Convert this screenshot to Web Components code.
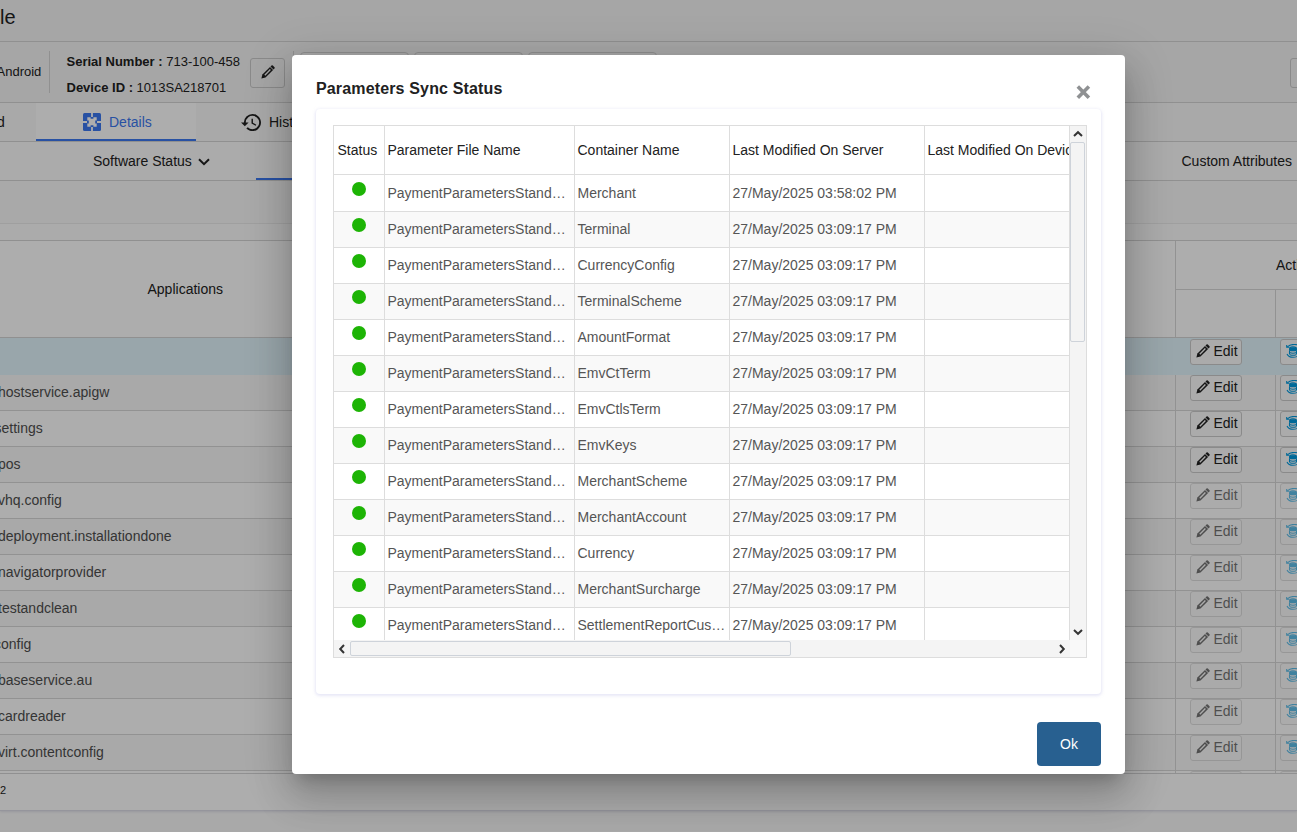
<!DOCTYPE html>
<html lang="en">
<head>
<meta charset="utf-8">
<title>Device Profile</title>
<style>
html,body{margin:0;padding:0;height:100%;overflow:hidden;background:#f9f9f9}
body{font-family:"Liberation Sans",Arial,sans-serif;font-size:14px;color:#212121}
</style>
</head>
<body>
<device-page></device-page>
<sync-dialog heading="Parameters Sync Status">
  <param-table></param-table>
</sync-dialog>
<script>
const icons = {
  blank: '',
  pencil: '<svg viewBox="0 0 14 14" width="14" height="14"><path d="M.4 13.6 1.4 9.500 9 1.900 12.100 5 4.500 12.600Z" fill="currentColor"/><path d="M9.500 1.500 10.500.5Q11.100 0 11.800.5L13.500 2.200Q14 2.800 13.500 3.500L12.500 4.500Z" fill="currentColor"/><path d="M3.300 9.700 8.900 4.100 9.900 5.100 4.300 10.700Z" fill="var(--hole,#fff)"/></svg>',
  terminal: '<svg viewBox="0 0 14 14" width="14" height="14" fill="none" stroke="#009be0" stroke-width="1.1"><path d="M1.200 2.900Q6.500-1 12.500 1.200"/><path d="M.7 1.100v2.200h2.500"/><path d="M1 10Q2.500 13.300 7 13.300 11 13.300 13 11"/><path d="M3 4.200Q7 2.400 11 4.200V6.700Q7 8 3 6.700Z" fill="#009be0" stroke="none"/><path d="M3.300 4Q7 1.800 10.700 4M3.500 8.600Q7 9.800 10.500 8.600M4 10.700Q7 11.800 10 10.700M3.500 7v3.500M10.500 7v3.500"/></svg>',
  details: '<svg viewBox="0 0 18 18" width="18" height="18"><rect width="18" height="18" rx="1.500" fill="#3b78f0"/><path d="M9 0v4M9 14V18M0 9h4M14 9H18" stroke="#fff" stroke-width="1.800"/><path d="M4.300 4.300H7.600V5.800H10.400V4.300H13.700V7.600H12.200V10.400H13.700V13.700H10.400V12.200H7.600V13.700H4.300V10.400H5.800V7.600H4.300Z" fill="#fff"/></svg>',
  history: '<svg viewBox="1 1 22 19" width="21" height="19"><path d="M13 1.500a9 9 0 0 0-9 9H1l4 4 4-4H6a7 7 0 1 1 2.100 4.950L6.600 16.900A9 9 0 1 0 13 1.500Zm-1 5v5l4.300 2.500.7-1.200-3.500-2.100V6.500Z" fill="currentColor"/></svg>'
};
function chevron(deg){
  return `<svg viewBox="0 0 10 10" width="10" height="10" style="transform:rotate(${deg}deg)"><path d="M1 7 5 3.200 9 7" fill="none" stroke="#333" stroke-width="2"/></svg>`;
}
class Base extends HTMLElement {
  render(html){ this.attachShadow({mode:'open'}).innerHTML = '<style>*{box-sizing:border-box}svg{display:block;flex:none}</style>' + html; }
}

customElements.define('icon-button', class extends Base {
  connectedCallback(){
    this.render(`<style>
      :host{display:flex;box-sizing:border-box;height:26px;border:1px solid #ccc;border-radius:3px;align-items:center;overflow:hidden;flex:none;color:#212121;background:var(--fill,transparent)}
      :host([off]){opacity:.62}
      div{margin:-3px 4px 0 4.5px}
      span{margin-top:-2px}
    </style><div>${icons[this.getAttribute('icon')]}</div><span><slot></slot></span>`);
  }
});

customElements.define('app-row', class extends Base {
  connectedCallback(){
    const off = this.hasAttribute('off') ? 'off' : '';
    this.render(`<style>
      :host{display:grid;grid-template-columns:1175px 100px 22px;height:36px;box-sizing:border-box;border-bottom:1px solid #d8d8d8;color:#4e4e4e;flex:none}
      :host([odd]){background:#f9f9f9}
      :host([active]){background:#e2f5fc;height:37px;border-bottom:0;--line:transparent}
      .name{white-space:nowrap;line-height:34px}
      .name span{margin-left:var(--dx,0px)}
      .cell{border-left:1px solid var(--line,#d8d8d8);overflow:hidden;display:flex;align-items:flex-start}
      :host([active]) .cell{padding-top:1px}
      .cell icon-button{width:52px;margin-left:14px;--hole:#fdfdfd;--fill:#fdfdfd}
      .cell icon-button.t{margin-left:4px}
    </style>
    <div class="name"><span><slot></slot></span></div>
    <div class="cell"><icon-button icon="pencil" ${off}>Edit</icon-button></div>
    <div class="cell"><icon-button class="t" icon="terminal" ${off}></icon-button></div>`);
  }
});

customElements.define('device-page', class extends Base {
  connectedCallback(){
    const apps = [['hostservice.apigw',-2],['settings',-5.5],['pos',-2],['vhq.config',-2],['deployment.installationdone',-2],['navigatorprovider',-2],['testandclean',-2],['config',-6],['baseservice.au',-2],['cardreader',-2],['virt.contentconfig',-2]];
    this.render(`<style>
      :host{display:flex;flex-direction:column;width:1297px;height:832px;overflow:hidden}
      header{height:42px;background:#f5f5f5;border-bottom:1px solid #d4d4d4;font-size:20px;line-height:35px;white-space:nowrap}
      .info{height:61px;background:#f5f5f5;border-bottom:1px solid #d4d4d4;display:flex;align-items:flex-start;white-space:nowrap;font-size:13px;overflow:hidden}
      .info>*{flex:none}
      .os{width:50px;height:42px;margin-top:9px;border-right:1px solid #d4d4d4;line-height:42px}
      .os span{margin-left:-3.5px}
      .ids{width:200px;padding:7px 0 0 16.5px;line-height:26px}
      .info icon-button{width:35px;height:30px;margin-top:16px;padding-left:5px;--hole:#f5f5f5}
      .sep{width:7px;height:42px;margin-top:9px;border-left:1px solid #d4d4d4;margin-left:8px}
      .ghost{height:30px;margin:10px 5px 0 0;border:1px solid #d0d0d0;border-radius:4px}
      .tabs{height:39px;display:flex;background:#f9f9f9;border-bottom:1px solid #d4d4d4;line-height:38px}
      .tab{display:flex;align-items:center;white-space:nowrap}
      .tab.on{width:160px;background:#fff;color:#3b78f0;border-bottom:2px solid #3b78f0;height:38px;padding:2px 0 0 47px;gap:8px;line-height:34px}
      .sub{height:39px;display:flex;background:#fcfcfc;border-bottom:1px solid #d4d4d4;line-height:38px;white-space:nowrap}
      .sub .cur{width:160px;border-bottom:2px solid #3b78f0;height:38px}
      .band{height:43px;background:#f9f9f9;border-bottom:1px solid #ebebeb}
      .gap{height:17px;background:#fdfdfd;border-bottom:1px solid #d4d4d4}
      .thead{height:97px;flex:none;display:grid;grid-template-columns:1175px 122px;background:#fff;border-bottom:1px solid #d4d4d4}
      .thead>div:first-child{padding-left:147.5px;line-height:96px}
      .act{border-left:1px solid #d8d8d8;display:grid;grid-template-rows:49px 1fr;grid-template-columns:99px 22px}
      .act b{font-weight:400;grid-column:1/3;border-bottom:1px solid #d8d8d8;line-height:48px;padding-left:100px;overflow:hidden}
      .act i{border-right:1px solid #d8d8d8;width:100px}
      .rows{height:436px;overflow:hidden;flex:none;background:#fff;border-bottom:1px solid #d4d4d4;display:flex;flex-direction:column}
      .foot{height:37px;flex:none;background:#fff;border-bottom:1px solid #dcdce6;box-shadow:0 1px 2px #e0e0e8;font-size:11px;line-height:33px;position:relative}
    </style>
    <header>le</header>
    <div class="info">
      <div class="os"><span>Android</span></div>
      <div class="ids"><div><b>Serial Number :</b> 713-100-458</div><div><b>Device ID :</b> 1013SA218701</div></div>
      <icon-button icon="pencil"></icon-button>
      <div class="sep"></div>
      <div class="ghost" style="width:109px"></div><div class="ghost" style="width:109px"></div><div class="ghost" style="width:129px"></div>
      <icon-button icon="blank" style="margin-left:628px"></icon-button>
    </div>
    <div class="tabs">
      <div class="tab" style="width:36px"><span style="margin-left:-3px">d</span></div>
      <div class="tab on">${icons.details}<span>Details</span></div>
      <div class="tab" style="padding-left:45px;gap:7px">${icons.history}<span>History</span></div>
    </div>
    <div class="sub">
      <div style="width:93px"></div>
      <div style="width:163px;display:flex;gap:6px;align-items:center"><span>Software Status</span><svg width="12" height="8" viewBox="0 0 12 8" style="margin-top:1px"><path d="M1 1.200 6 6.200 11 1.200" fill="none" stroke="#212121" stroke-width="2"/></svg></div>
      <div class="cur"></div>
      <div style="margin-left:765.5px">Custom Attributes</div>
    </div>
    <div class="band"></div><div class="gap"></div>
    <div class="thead"><div>Applications</div><div class="act"><b>Actions</b><i></i></div></div>
    <div class="rows"><app-row active></app-row>${apps.map((a,i)=>`<app-row ${i%2?'':'odd'} ${i>2?'off':''} style="--dx:${a[1]}px">${a[0]}</app-row>`).join('')}<app-row off></app-row></div>
    <div class="foot">2</div>`);
  }
});

customElements.define('param-table', class extends Base {
  connectedCallback(){
    const names = ['Merchant','Terminal','CurrencyConfig','TerminalScheme','AmountFormat','EmvCtTerm','EmvCtlsTerm','EmvKeys','MerchantScheme','MerchantAccount','Currency','MerchantSurcharge','SettlementReportCustomization'];
    this.render(`<style>
      :host{display:grid;box-sizing:border-box;width:754px;height:533px;border:1px solid #ddd;grid-template-columns:736px 16px;grid-template-rows:514px 17px;overflow:hidden}
      .view{overflow:hidden;border-right:1px solid #ddd}
      .r{display:grid;grid-template-columns:51px 190px 155px 195px 195px;height:36px;border-bottom:1px solid #ddd;color:#555}
      .r:nth-child(odd){background:#f9f9f9}
      .r.h{height:49px;color:#212121;background:#fff}
      .r.f{height:37px}
      .r>div{border-right:1px solid #ddd;padding:0 3px 0 2.5px;line-height:34px;white-space:nowrap;overflow:hidden;text-overflow:ellipsis}
      .r.f>div{line-height:36px}
      .r.h>div{line-height:48px;padding-right:0}
      .r.h>div:first-child{padding-left:3.5px}
      .r>.s{padding:6px 0 0 18px}
      .r.f>.s{padding-top:7px}
      .s i{display:block;width:14px;height:14px;border-radius:50%;background:#1db405}
      .r>div:nth-child(2){padding-right:4px}
      .v{background:#f4f4f4;display:flex;flex-direction:column;align-items:center}
      .v .th{width:15px;height:200px;border:1px solid #ced3da;border-radius:2px;background:#f4f4f4;margin:3px 1px 0 0}
      .hz{background:#f4f4f4;display:flex;align-items:center;padding-left:3px}
      .hz .th{width:441px;height:15px;border:1px solid #ced3da;border-radius:2px;margin:0 auto 0 3px}
      .c{background:#f9f9f9}
    </style>
    <div class="view">
      <div class="r h"><div>Status</div><div>Parameter File Name</div><div>Container Name</div><div>Last Modified On Server</div><div>Last Modified On Device</div></div>
      ${names.map((n,i)=>`<div class="r ${i?'':'f'}"><div class="s"><i></i></div><div>PaymentParametersStandard</div><div>${n}</div><div>27/May/2025 03:${i?'09:17':'58:02'} PM</div><div></div></div>`).join('')}
    </div>
    <div class="v"><div style="margin:3px 1px 0 0">${chevron(0)}</div><div class="th"></div><div style="margin:auto 1px 3px 0">${chevron(180)}</div></div>
    <div class="hz">${chevron(-90)}<div class="th"></div><div style="margin-right:3px">${chevron(90)}</div></div>
    <div class="c"></div>`);
  }
});

customElements.define('sync-dialog', class extends Base {
  connectedCallback(){
    this.render(`<style>
      :host{position:absolute;inset:0;background:rgba(0,0,0,.32)}
      .box{position:absolute;left:292px;top:55px;width:833px;height:719px;background:#fff;border-radius:4px;padding:0 24px;display:flex;flex-direction:column;box-shadow:0 11px 15px -7px rgba(0,0,0,.2),0 24px 38px 3px rgba(0,0,0,.14),0 9px 46px 8px rgba(0,0,0,.12)}
      .top{display:flex;justify-content:space-between;height:54px;padding-right:10px}
      h2{margin:0;font-size:16px;line-height:68px;letter-spacing:.15px}
      .top svg{margin-top:30px}
      .panel{height:585px;border-radius:4px;box-shadow:0 1px 3px 1px rgba(210,210,240,.5);padding:16px 0 0 17px}
      button{display:block;margin:28px 0 0 auto;width:64px;height:44px;border:0;border-radius:4px;background:#286090;color:#fff;font:14px "Liberation Sans",Arial,sans-serif;padding:0}
    </style>
    <div class="box">
      <div class="top"><h2>${this.getAttribute('heading')}</h2><svg width="15" height="14" viewBox="0 0 15 14"><path d="M1.800 1.600 12.900 12.700M12.900 1.600 1.800 12.700" stroke="#8f9193" stroke-width="3.600"/></svg></div>
      <div class="panel"><slot></slot></div>
      <button>Ok</button>
    </div>`);
  }
});
</script>
</body>
</html>
